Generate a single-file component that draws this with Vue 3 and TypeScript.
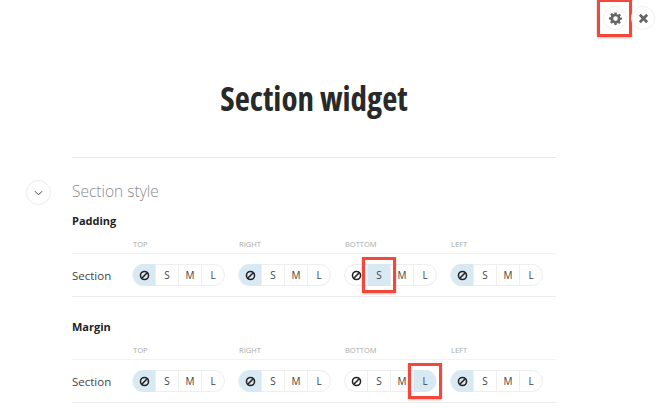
<template>
  <div class="page">
    <div class="toolbar">
      <button class="round-btn marked">
        <svg viewBox="0 0 24 24" width="13" height="13">
          <path
            fill="#666"
            fill-rule="evenodd"
            d="M10 1h4l.6 3.2 1.9.8 2.7-1.8 2.8 2.8-1.8 2.7.8 1.9L24 10v4l-3.2.6-.8 1.9 1.8 2.7-2.8 2.8-2.7-1.8-1.9.8L14 24h-4l-.6-3.2-1.9-.8-2.7 1.8-2.8-2.8 1.8-2.7-.8-1.9L0 14v-4l3.2-.6.8-1.9-1.8-2.7 2.8-2.8 2.7 1.8 1.9-.8zM12 8a4.2 4.2 0 1 0 0 8.4A4.2 4.2 0 0 0 12 8z"
          />
        </svg>
        <span class="mark gear-mark"></span>
      </button>
      <button class="round-btn">
        <svg viewBox="0 0 12 12" width="11" height="11">
          <path d="M2 2l8 8M10 2l-8 8" stroke="#666" stroke-width="3" fill="none" />
        </svg>
      </button>
    </div>

    <div class="content">
      <h1 class="title">Section widget</h1>
      <hr class="rule" />
      <div class="section-head">
        <button class="collapse-btn">
          <svg viewBox="0 0 10 6" width="9" height="6">
            <path d="M1 1l4 4 4-4" stroke="#444" stroke-width="1.1" fill="none" />
          </svg>
        </button>
        <h2 class="section-title">Section style</h2>
      </div>

      <div v-for="group in groups" :key="group.name" class="group">
        <h3 class="group-name">{{ group.name }}</h3>
        <div class="labels">
          <span v-for="side in sides" :key="side">{{ side }}</span>
        </div>
        <div class="row">
          <span class="row-name">Section</span>
          <div class="toggles">
            <div v-for="side in sides" :key="side" class="toggle">
              <span
                v-for="opt in options"
                :key="opt"
                class="seg"
                :class="{ active: selected(group, side) === opt }"
              >
                <svg v-if="opt === 'none'" viewBox="0 0 12 12" width="11" height="11">
                  <circle cx="6" cy="6" r="4.4" stroke="#222" stroke-width="1.7" fill="none" />
                  <path d="M3 9l6-6" stroke="#222" stroke-width="1.7" />
                </svg>
                <template v-else>{{ opt }}</template>
                <span
                  v-if="side === 'BOTTOM' && selected(group, side) === opt"
                  class="mark"
                ></span>
              </span>
            </div>
          </div>
        </div>
      </div>
    </div>
  </div>
</template>

<script setup lang="ts">
interface Group {
  name: string
  bottom: string
}

const sides = ["TOP", "RIGHT", "BOTTOM", "LEFT"]
const options = ["none", "S", "M", "L"]
const groups: Group[] = [
  { name: "Padding", bottom: "S" },
  { name: "Margin", bottom: "L" },
]

function selected(group: Group, side: string) {
  return side === "BOTTOM" ? group.bottom : "none"
}
</script>

<style>
html,
body {
  margin: 0;
  background: #fff;
  overflow: hidden;
}
</style>

<style scoped>
.page {
  width: 670px;
  height: 416px;
  overflow: hidden;
  font-family: "Open Sans", "Noto Sans", sans-serif;
  color: #333;
}

.toolbar {
  display: flex;
  justify-content: flex-end;
  gap: 4px;
  padding: 6px 15px 0 0;
}

.round-btn {
  position: relative;
  width: 24px;
  height: 24px;
  padding: 0;
  display: flex;
  align-items: center;
  justify-content: center;
  border: 1px solid #f0f0f0;
  border-radius: 50%;
  background: #fff;
}

.mark {
  position: absolute;
  inset: -7px -6px -7px -6px;
  border: 3px solid #f4473a;
  box-shadow: 0 1px 2px rgba(0, 0, 0, 0.25);
  pointer-events: none;
}

.gear-mark {
  inset: -8px -6px -8px -7px;
}

.content {
  margin: 0 114px 0 72px;
}

.title {
  margin: 51px 0 0;
  height: 36px;
  text-align: center;
  font-size: 33px;
  line-height: 36px;
  font-weight: 700;
  font-stretch: 75%;
  color: #292929;
}

.rule {
  margin: 40px 0 0;
  border: 0;
  border-top: 1px solid #e8e8e8;
}

.section-head {
  position: relative;
  margin-top: 22px;
  height: 22px;
}

.collapse-btn {
  position: absolute;
  left: -46px;
  top: 0;
  width: 25px;
  height: 25px;
  padding: 0;
  display: flex;
  align-items: center;
  justify-content: center;
  border: 1px solid #ececec;
  border-radius: 50%;
  background: #fff;
}

.section-title {
  margin: 0;
  font-size: 15.5px;
  line-height: 22px;
  font-weight: 300;
  color: #8a8a8a;
}

.group-name {
  margin: 11px 0 0;
  font-size: 11px;
  line-height: 16px;
  font-weight: 700;
  color: #222;
}

.group + .group {
  margin-top: 22px;
}

.labels {
  display: grid;
  grid-template-columns: repeat(4, 106px);
  margin-top: 10px;
  padding: 0 0 3px 61px;
  border-bottom: 1px solid #f2f2f2;
  font-size: 7.5px;
  line-height: 11px;
  color: #a8a8a8;
}

.row {
  display: flex;
  align-items: center;
  height: 42px;
  border-bottom: 1px solid #ececec;
}

.row-name {
  width: 61px;
  font-size: 11.5px;
  color: #444;
}

.toggles {
  display: grid;
  grid-template-columns: repeat(4, 106px);
}

.toggle {
  display: flex;
  width: 93px;
  height: 22px;
  box-sizing: border-box;
  border: 1px solid #eeeeee;
  border-radius: 11px;
}

.seg {
  position: relative;
  flex: 1;
  display: flex;
  align-items: center;
  justify-content: center;
  font-size: 10px;
  color: #444;
  border-left: 1px solid #eeeeee;
}

.seg:first-child {
  border-left: 0;
  border-radius: 11px 0 0 11px;
}

.seg:last-child {
  border-radius: 0 11px 11px 0;
}

.seg.active {
  margin: -1px 0;
  background: #d9e9f4;
}
</style>
